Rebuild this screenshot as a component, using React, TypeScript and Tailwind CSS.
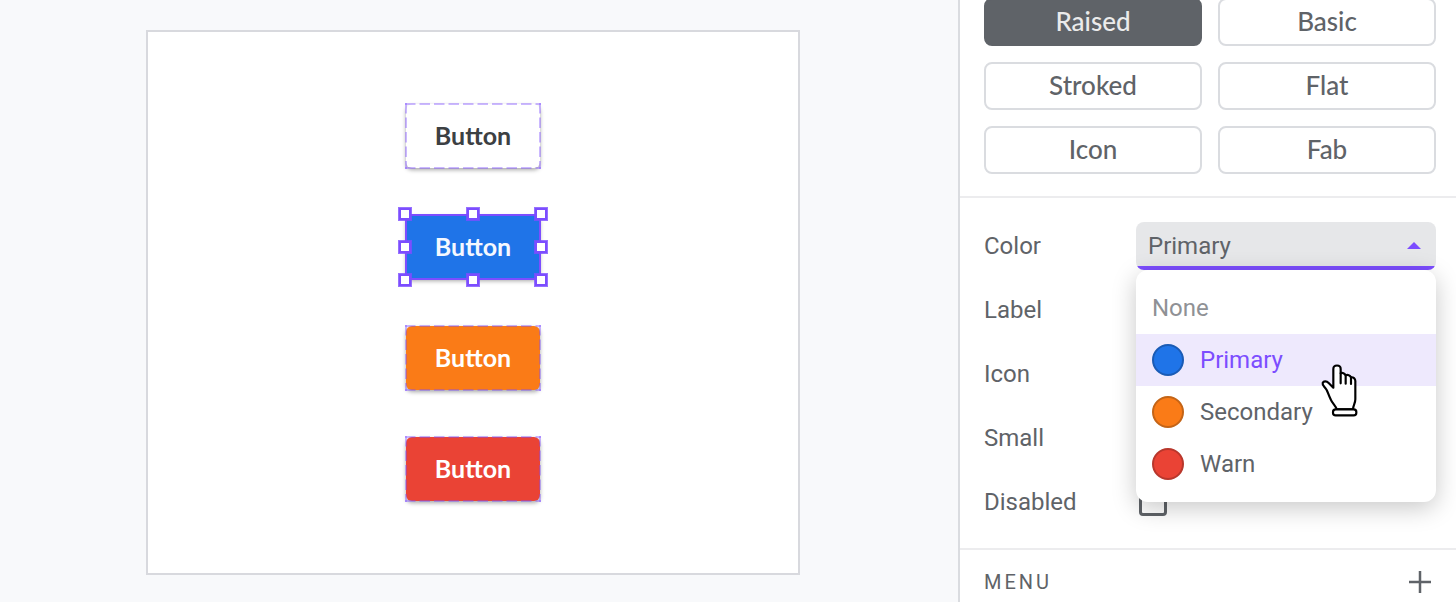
import { useState } from "react";

const variants = ["Raised", "Basic", "Stroked", "Flat", "Icon", "Fab"];

const samples = [
  { id: "none", fill: "bg-white text-[#3c4043]" },
  { id: "primary", fill: "bg-[#1f74e8] text-[#f5f8ff]" },
  { id: "secondary", fill: "bg-[#fa7b17] text-white" },
  { id: "warn", fill: "bg-[#ea4335] text-white" },
];

const colors = [
  { name: "Primary", swatch: "bg-[#1f74e8] border-[#1a5bb5]" },
  { name: "Secondary", swatch: "bg-[#fa7b17] border-[#c46416]" },
  { name: "Warn", swatch: "bg-[#ea4335] border-[#b8372c]" },
];

const handles = [
  "left-0 top-0",
  "left-1/2 top-0",
  "left-full top-0",
  "left-0 top-1/2",
  "left-full top-1/2",
  "left-0 top-full",
  "left-1/2 top-full",
  "left-full top-full",
];

function DashedOutline() {
  return (
    <svg
      className="pointer-events-none absolute inset-0 h-full w-full overflow-visible"
      stroke="#7c4dff"
      strokeOpacity="0.4"
      strokeWidth="2"
      strokeDasharray="10.5 4"
      aria-hidden="true"
    >
      <line x1="0" y1="1" x2="100%" y2="1" />
      <line x1="0" y1="65" x2="100%" y2="65" />
      <line x1="1" y1="0" x2="1" y2="100%" />
      <line x1="135" y1="0" x2="135" y2="100%" />
    </svg>
  );
}

function Selection() {
  return (
    <div className="pointer-events-none absolute inset-0 ring-2 ring-inset ring-[#7c4dff]">
      {handles.map((place) => (
        <span
          key={place}
          className={`absolute size-3 -translate-x-1/2 -translate-y-1/2 border-2 border-[#7c4dff] bg-white ring-1 ring-[#7c4dff]/80 ${place}`}
        />
      ))}
    </div>
  );
}

function HandCursor() {
  return (
    <svg
      className="pointer-events-none absolute left-[185px] top-[142px] h-[54px] w-[38px]"
      viewBox="35 42 114 162"
      fill="#fff"
      stroke="#000"
      strokeWidth="6.5"
      strokeLinecap="round"
      strokeLinejoin="round"
      aria-hidden="true"
    >
      <path d="M82 178C80 168 70 162 64 148C58 136 56 128 52 120C46 110 38 106 40 99C43 92 52 93 58 99L72 113V57C72 43 94 43 94 57V70C99 67 106 70 109 76C115 73 122 76 125 82C132 81 138 85 138 93V148C138 160 132 164 131 178Z" />
      <path d="M94 70V100M109 76V101M125 82V102" fill="none" />
      <rect x="71" y="178" width="70" height="18" rx="8" />
    </svg>
  );
}

export default function App() {
  const [variant, setVariant] = useState("Raised");
  const [color, setColor] = useState("Primary");

  return (
    <div className="flex h-screen overflow-hidden bg-[#f8f9fb] font-['Roboto',sans-serif] text-2xl text-[#5f6368]">
      <main className="flex flex-1 items-start justify-center pr-3 pt-[30px]">
        <section className="flex w-[654px] flex-col items-center gap-[45px] border-2 border-[#d8d9de] bg-white pb-[71px] pt-[71px]">
          {samples.map((s) => (
            <div key={s.id} className="relative p-px">
              <button
                type="button"
                className={`h-16 w-[134px] rounded-md font-['Lato',sans-serif] text-[25px] font-bold shadow-[0_2px_4px_rgba(0,0,0,0.35)] ${s.fill}`}
              >
                Button
              </button>
              {s.id === "primary" ? <Selection /> : <DashedOutline />}
            </div>
          ))}
        </section>
      </main>

      <aside className="-mt-0.5 w-[498px] shrink-0 border-l-2 border-[#dadce0] bg-white">
        <div className="grid grid-cols-2 gap-4 border-b-2 border-[#ececee] pb-[22px] pl-6 pr-5">
          {variants.map((v) => (
            <button
              key={v}
              type="button"
              aria-pressed={v === variant}
              onClick={() => setVariant(v)}
              className={`h-12 rounded-lg border-2 pb-0.5 font-['Lato',sans-serif] text-[26px] leading-8 font-medium ${
                v === variant
                  ? "border-[#5f6368] bg-[#5f6368] text-[#ebebeb]"
                  : "border-[#dadce0] bg-white"
              }`}
            >
              {v}
            </button>
          ))}
        </div>

        <div className="grid grid-cols-[136px_1fr] items-center gap-4 border-b-2 border-[#ececee] pb-[22px] pl-6 pr-5 pt-6">
          <label htmlFor="color">Color</label>
          <div className="relative z-10 h-12">
            <select
              id="color"
              value={color}
              onChange={(e) => setColor(e.target.value)}
              className="h-12 w-full appearance-none rounded-lg bg-[linear-gradient(to_top,#7c4dff_4px,#e6e7e9_4px)] pl-3 outline-none"
            >
              <option>None</option>
              {colors.map((c) => (
                <option key={c.name}>{c.name}</option>
              ))}
            </select>
            <svg
              className="pointer-events-none absolute right-[15px] top-5 h-[7px] w-[14px]"
              viewBox="0 0 14 7"
              fill="#7c4dff"
              aria-hidden="true"
            >
              <path d="M0 7L7 0L14 7Z" />
            </svg>
            <div
              role="listbox"
              aria-label="Color"
              className="absolute inset-x-0 top-full flex flex-col rounded-xl bg-white py-3 shadow-[0_6px_24px_rgba(0,0,0,0.22)]"
            >
              <button
                type="button"
                role="option"
                aria-selected={color === "None"}
                onClick={() => setColor("None")}
                className="h-[52px] px-4 text-left text-[#8f9195]"
              >
                None
              </button>
              {colors.map((c) => (
                <button
                  key={c.name}
                  type="button"
                  role="option"
                  aria-selected={color === c.name}
                  onClick={() => setColor(c.name)}
                  className={`flex h-[52px] items-center gap-4 px-4 ${
                    color === c.name ? "bg-[#eee9fd] text-[#7c4dff]" : ""
                  }`}
                >
                  <span className={`size-8 rounded-full border-2 ${c.swatch}`} />
                  {c.name}
                </button>
              ))}
            </div>
            <HandCursor />
          </div>

          <label htmlFor="label" className="leading-[48px]">Label</label>
          <input id="label" type="text" className="h-10 w-full rounded-lg bg-[#f1f3f4] px-3" />

          <label htmlFor="icon" className="leading-[48px]">Icon</label>
          <input id="icon" type="text" className="h-10 w-full rounded-lg bg-[#f1f3f4] px-3" />

          <label htmlFor="small" className="leading-[48px]">Small</label>
          <input
            id="small"
            type="checkbox"
            className="ml-[3px] size-7 appearance-none rounded-sm border-[3px] border-[#5f6368]"
          />

          <label htmlFor="disabled" className="leading-[48px]">Disabled</label>
          <input
            id="disabled"
            type="checkbox"
            className="ml-[3px] size-7 appearance-none rounded-sm border-[3px] border-[#5f6368]"
          />
        </div>

        <div className="flex h-16 items-center justify-between pl-6 pr-[25px]">
          <h2 className="text-xl tracking-[3px]">MENU</h2>
          <button type="button" aria-label="Add menu">
            <svg className="size-[22px]" viewBox="0 0 22 22" stroke="#5f6368" strokeWidth="2.5" aria-hidden="true">
              <path d="M11 0V22M0 11H22" />
            </svg>
          </button>
        </div>
      </aside>
    </div>
  );
}
